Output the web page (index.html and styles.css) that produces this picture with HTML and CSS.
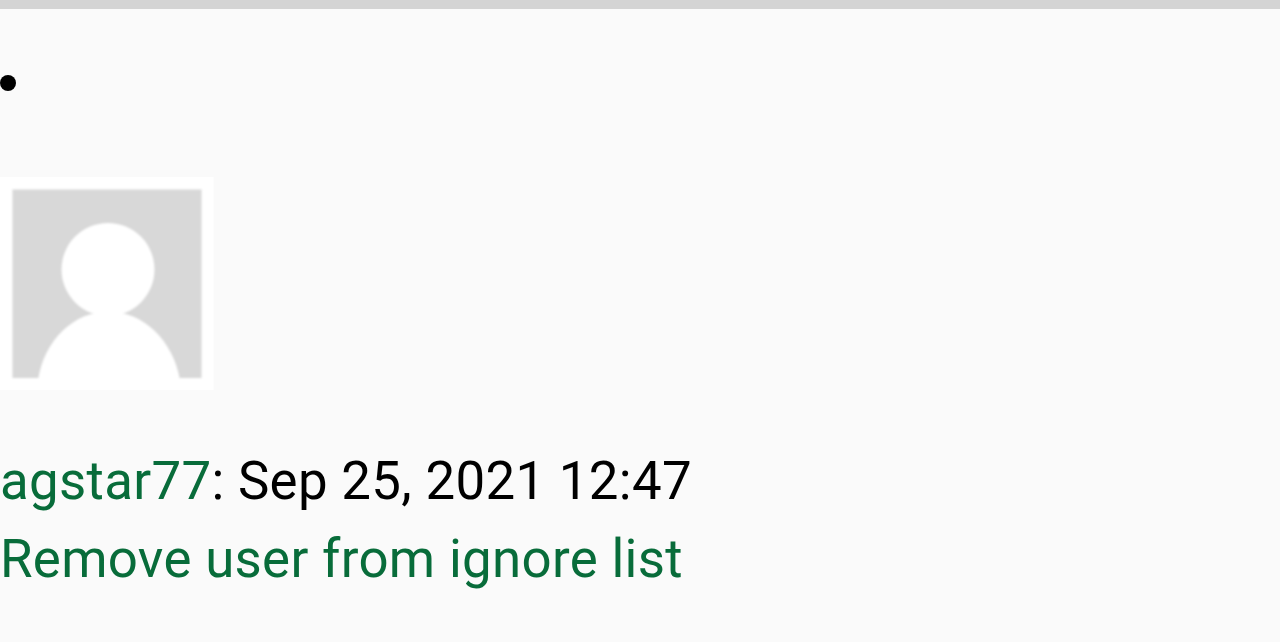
FILE: index.html
```html
<!DOCTYPE html>
<html lang="en">
<head>
    <meta charset="UTF-8">
    <meta name="viewport" content="width=device-width, initial-scale=1.0">
    <title>Ignored user</title>
    <link rel="stylesheet" href="styles.css">
</head>
<body>
    <div class="post">
        <div class="bullet"></div>
        <svg class="avatar" viewBox="0 0 213.5 213.5">
            <rect width="213.5" height="213.5" fill="#fff"/>
            <g class="avatar-figure">
                <rect x="12.5" y="12.5" width="189" height="188.5" fill="#d8d8d8"/>
                <circle cx="108" cy="92.5" r="46.5" fill="#fff"/>
                <path d="M38 203C44 163 74 134.500 108.500 134.500S173 163 180 203Z" fill="#fff"/>
            </g>
        </svg>
        <p class="author"><a href="#">agstar77</a>: Sep 25, 2021 12:47</p>
        <p class="ignore"><a href="#">Remove user from ignore list</a></p>
    </div>
</body>
</html>
```

FILE: styles.css
```css
body {
    margin: 0;
    font-family: Roboto, sans-serif;
    font-size: 52.8px;
    line-height: 78px;
    letter-spacing: 0.32px;
    color: #000;
    background-color: #fafafa;
    overflow: hidden;
}

.post {
    border-top: 9px solid #d4d4d4;
    padding-top: 66px;
}

.bullet {
    width: 16px;
    height: 16px;
    border-radius: 50%;
    background-color: #000;
}

.avatar {
    display: block;
    width: 213.5px;
    height: 213.5px;
    margin-top: 85.5px;
}

.avatar-figure {
    filter: blur(1px);
}

p {
    margin: 0;
    white-space: nowrap;
}

.author {
    margin-top: 52px;
}

a {
    color: #086c3a;
    text-decoration: none;
}
```
